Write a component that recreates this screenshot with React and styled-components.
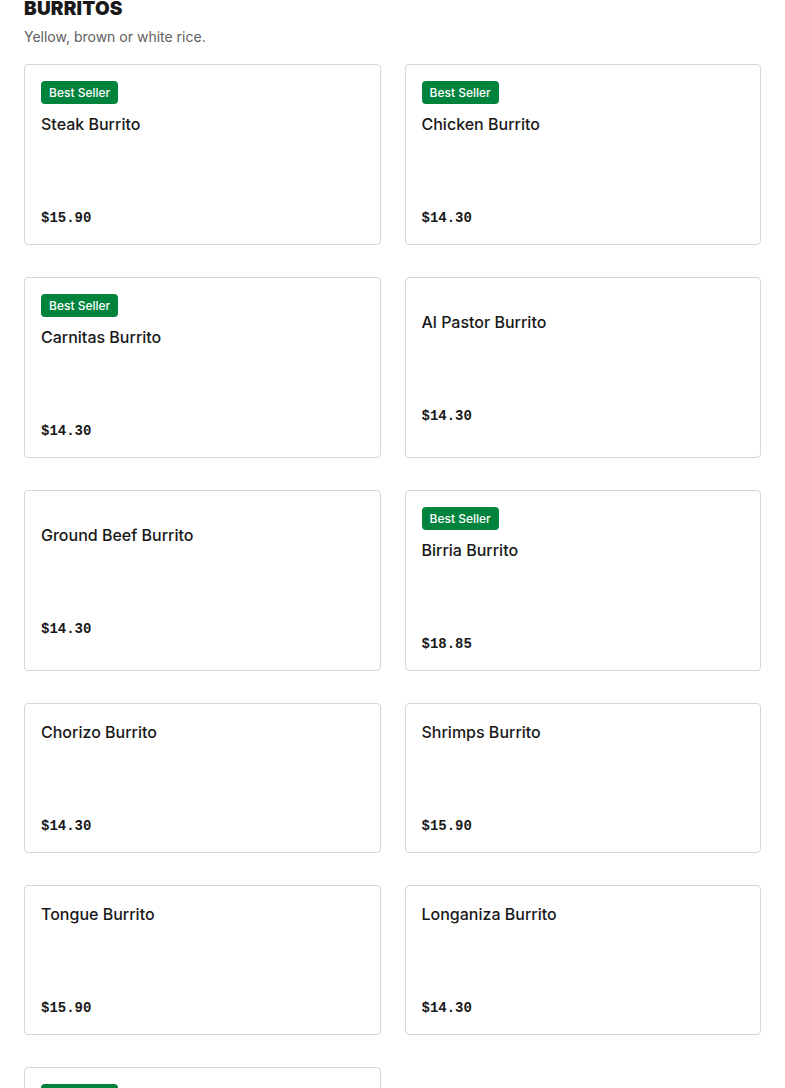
import React from "react";
import styled, { createGlobalStyle } from "styled-components";

const Global = createGlobalStyle`
  html, body { margin: 0; padding: 0; background: #ffffff; }
  body { font-family: Inter, "Liberation Sans", sans-serif; color: #191919; }
  * { box-sizing: border-box; }
`;

const Page = styled.main`
  padding: 0 24px 40px;
`;

const Heading = styled.h2`
  margin: -3px 0 0;
  font-family: Inter, "Liberation Sans", sans-serif;
  font-size: 19px;
  line-height: 24px;
  font-weight: 900;
  letter-spacing: 0.2px;
  color: #191919;
  text-transform: uppercase;
`;

const Subtitle = styled.p`
  margin: 6px 0 0;
  font-size: 14px;
  line-height: 20px;
  color: #606060;
`;

const Grid = styled.div`
  margin-top: 17px;
  display: grid;
  grid-template-columns: 1fr 1fr;
  column-gap: 24px;
  row-gap: 32px;
`;

const Card = styled.article`
  border: 1px solid #d6d6d6;
  border-radius: 4px;
  padding: 16px;
  display: flex;
  flex-direction: column;
  justify-content: center;
  background: #fff;
`;

const Badge = styled.span`
  align-self: flex-start;
  height: 23px;
  line-height: 23px;
  padding: 0 8px;
  margin-bottom: 8px;
  border-radius: 4px;
  background: #00833d;
  color: #ffffff;
  font-size: 12px;
  font-weight: 500;
`;

const Title = styled.h3`
  margin: 0;
  font-size: 16px;
  line-height: 24px;
  font-weight: 550;
  color: #191919;
`;

const Price = styled.div`
  margin-top: 72px;
  font-family: "Liberation Mono", "DejaVu Sans Mono", monospace;
  font-size: 14px;
  line-height: 20px;
  font-weight: 700;
  color: #191919;
`;

const items = [
  { name: "Steak Burrito", price: "$15.90", best: true },
  { name: "Chicken Burrito", price: "$14.30", best: true },
  { name: "Carnitas Burrito", price: "$14.30", best: true },
  { name: "Al Pastor Burrito", price: "$14.30" },
  { name: "Ground Beef Burrito", price: "$14.30" },
  { name: "Birria Burrito", price: "$18.85", best: true },
  { name: "Chorizo Burrito", price: "$14.30" },
  { name: "Shrimps Burrito", price: "$15.90" },
  { name: "Tongue Burrito", price: "$15.90" },
  { name: "Longaniza Burrito", price: "$14.30" },
  { name: "Vegetarian Burrito", price: "$13.50", best: true },
];

export default function App() {
  return (
    <>
      <Global />
      <Page>
        <Heading>Burritos</Heading>
        <Subtitle>Yellow, brown or white rice.</Subtitle>
        <Grid>
          {items.map((it) => (
            <Card key={it.name}>
              {it.best && <Badge>Best Seller</Badge>}
              <Title>{it.name}</Title>
              <Price>{it.price}</Price>
            </Card>
          ))}
        </Grid>
      </Page>
    </>
  );
}
